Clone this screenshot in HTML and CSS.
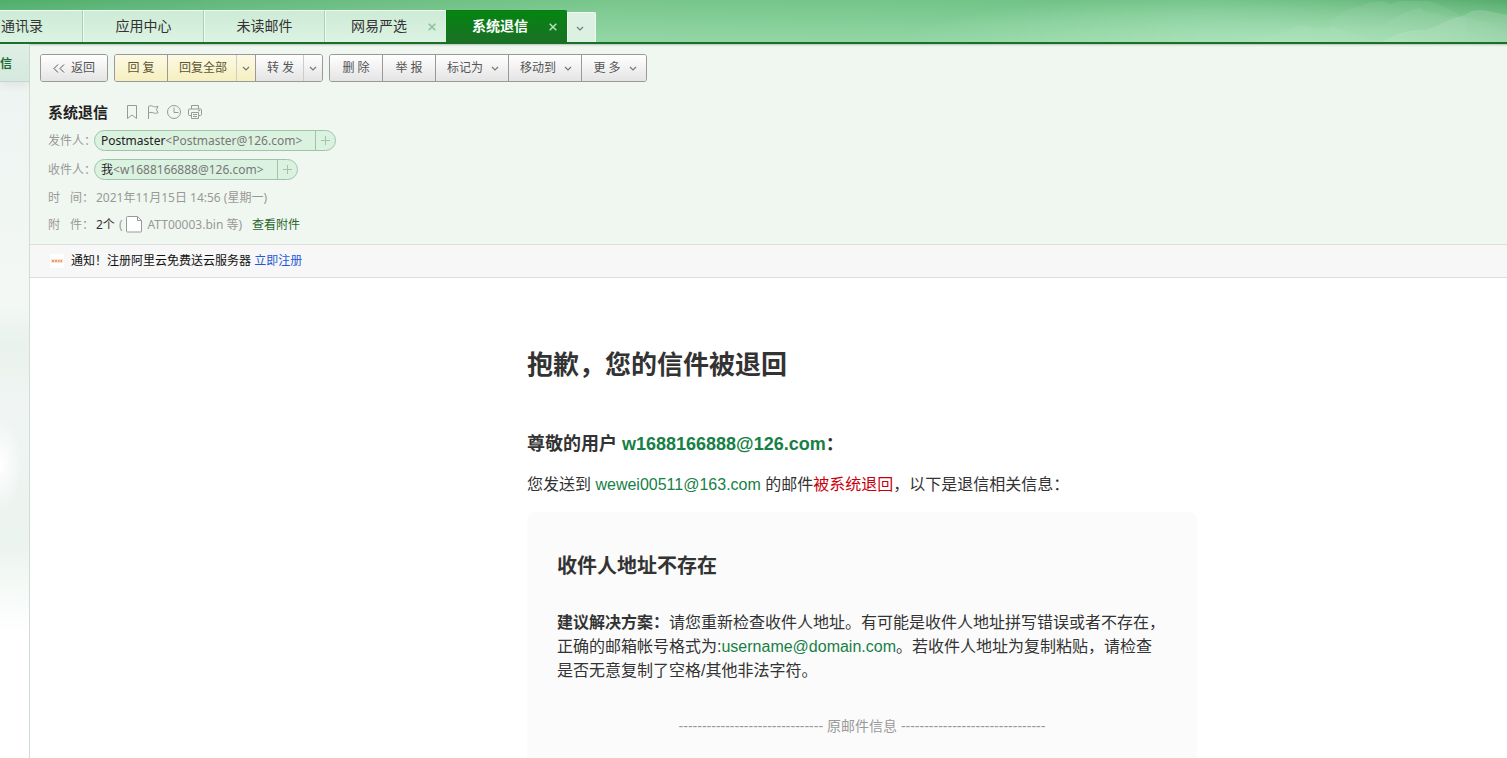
FILE: index.html
```html
<!DOCTYPE html>
<html lang="zh-CN">
<head>
<meta charset="utf-8">
<title>系统退信</title>
<link rel="stylesheet" href="styles.css">
</head>
<body>
<svg class="defs" aria-hidden="true">
  <symbol id="chevron" viewBox="0 0 8 6"><path d="M1 1l3 3 3-3" fill="none" stroke="currentColor" stroke-width="1.2"/></symbol>
  <symbol id="close" viewBox="0 0 8 8"><path d="M.7.7l6.6 6.6M7.3.7L.7 7.3" fill="none" stroke="currentColor" stroke-width="1.5"/></symbol>
</svg>
<header class="header">
  <svg class="hills" viewBox="0 0 407 42" aria-hidden="true">
    <defs>
      <linearGradient id="hillFade" x1="0" y1="0" x2="0" y2="1"><stop offset="0" stop-color="#fff" stop-opacity=".14"/><stop offset="1" stop-color="#fff" stop-opacity=".1"/></linearGradient>
      <linearGradient id="farFade" x1="0" y1="0" x2="0" y2="1"><stop offset="0" stop-color="#fff" stop-opacity=".07"/><stop offset="1" stop-color="#fff" stop-opacity="0"/></linearGradient>
    </defs>
    <path fill="url(#farFade)" d="M230 20l22-12 10-2 8-4 13-1 8 3 10-3 28 0 16 6 14 8 38 10v17H230z"/>
    <path fill="url(#farFade)" d="M282 26l16-10 14-6 8-2 7 4 8 1 12 4 8-1 12 3v23H250z"/>
    <path fill="url(#hillFade)" d="M281 42l16-8 8-2 11-2 10 0 12-5 14-6 12-4 8-4 9-1 8 1 8 2 10 2v29z"/>
    <path fill="url(#farFade)" d="M150 42l32-10 19-7 16 4 16-2 18 6 30 9z"/>
  </svg>
  <nav class="tabs">
    <div class="tab tab-cut"><button class="tab-label">通讯录</button></div>
    <div class="tab"><button class="tab-label">应用中心</button></div>
    <div class="tab"><button class="tab-label">未读邮件</button></div>
    <div class="tab closable"><button class="tab-label">网易严选</button><button class="tab-close" aria-label="关闭网易严选"><svg class="x"><use href="#close"/></svg></button></div>
    <div class="tab closable active"><button class="tab-label">系统退信</button><button class="tab-close" aria-label="关闭系统退信"><svg class="x"><use href="#close"/></svg></button></div>
    <button class="tab-more" aria-label="更多标签"><svg class="chev"><use href="#chevron"/></svg></button>
  </nav>
</header>
<div class="body">
  <aside class="side"><a class="side-item" href="#">信</a></aside>
  <main class="main">
    <div class="top">
      <div class="toolbar">
        <div class="group"><button class="btn back"><svg class="back-icon" viewBox="0 0 12 9"><path d="M5 .5l-4 4 4 4M11 .5l-4 4 4 4" fill="none" stroke="currentColor"/></svg>返回</button></div>
        <div class="group">
          <button class="btn yellow">回 复</button><button class="btn yellow wide">回复全部</button><button class="btn yellow drop" aria-label="回复全部选项"><svg class="chev"><use href="#chevron"/></svg></button><button class="btn send">转 发</button><button class="btn drop" aria-label="转发选项"><svg class="chev"><use href="#chevron"/></svg></button>
        </div>
        <div class="group">
          <button class="btn">删 除</button><button class="btn">举 报</button><button class="btn menu">标记为<svg class="chev"><use href="#chevron"/></svg></button><button class="btn menu">移动到<svg class="chev"><use href="#chevron"/></svg></button><button class="btn menu">更 多<svg class="chev"><use href="#chevron"/></svg></button>
        </div>
      </div>
      <div class="subject">
        <h1 class="subject-text">系统退信</h1>
        <button class="tool" aria-label="书签"><svg viewBox="0 0 14 14"><path d="M2.500.5h9v13L7 10l-4.500 3.500z"/></svg></button>
        <button class="tool" aria-label="旗标"><svg viewBox="0 0 14 14"><path d="M2.500 14V1.500c2-1.500 3.500-.5 5 0s3 .5 4.500-.2l-1.500 3.500 1.500 3c-2 .8-3.500.4-4.800 0s-3-.8-4.700.3"/></svg></button>
        <button class="tool" aria-label="定时"><svg viewBox="0 0 14 14"><circle cx="7" cy="7" r="6.500"/><path d="M7 2.500v5h4.500"/></svg></button>
        <button class="tool" aria-label="打印"><svg viewBox="0 0 14 14"><path d="M3.500 4V.5h7V4M3.500 10.500h-2a1 1 0 0 1-1-1v-4.500a1 1 0 0 1 1-1h11a1 1 0 0 1 1 1v4.500a1 1 0 0 1-1 1h-2M3.500 7.500h7v6h-7zM5 9.500h4M5 11.500h4M10 5.700h2"/></svg></button>
      </div>
      <div class="row"><span class="label">发件人：</span><span class="chip"><span class="chip-text"><b class="name">Postmaster</b>&lt;Postmaster@126.com&gt;</span><button class="add" aria-label="添加联系人"><svg viewBox="0 0 9 9"><path d="M4.500 0v9M0 4.500h9"/></svg></button></span></div>
      <div class="row"><span class="label">收件人：</span><span class="chip"><span class="chip-text"><b class="name">我</b>&lt;w1688166888@126.com&gt;</span><button class="add" aria-label="添加联系人"><svg viewBox="0 0 9 9"><path d="M4.500 0v9M0 4.500h9"/></svg></button></span></div>
      <div class="row short"><span class="label spread"><span>时</span><span>间：</span></span><span>2021年11月15日 14:56 (星期一)</span></div>
      <div class="row short"><span class="label spread"><span>附</span><span>件：</span></span><span class="files"><span class="count">2个</span><span>(</span><svg class="file" viewBox="0 0 17 17"><path d="M1.500.5h10l4 4v10.500a1 1 0 0 1-1 1h-13a1 1 0 0 1-1-1v-13.500a1 1 0 0 1 1-1z" fill="#fff" stroke="#999"/><path d="M11.500.5v4h4" fill="none" stroke="#999"/></svg><span>ATT00003.bin 等)</span></span><a class="view" href="#">查看附件</a></div>
    </div>
    <div class="notice">
      <svg class="ad" viewBox="0 0 14 14" aria-hidden="true"><rect width="14" height="14" fill="#fff"/><path d="M1 7h12" stroke="#fbe3d2" stroke-width="4"/><path d="M2 7h2M5 7h2M8 7h1.500M10.500 7H12" stroke="#ee9a68" stroke-width="2"/></svg>
      <span>通知！注册阿里云免费送云服务器 <a class="signup" href="#">立即注册</a></span>
    </div>
    <article class="mail">
      <div class="letter">
        <h2 class="title">抱歉，您的信件被退回</h2>
        <h3 class="dear">尊敬的用户 <a class="addr" href="#">w1688166888@126.com</a>：</h3>
        <p class="intro">您发送到 <a class="addr" href="#">wewei00511@163.com</a> 的邮件<span class="red">被系统退回</span>，以下是退信相关信息：</p>
        <section class="card">
          <h3 class="reason">收件人地址不存在</h3>
          <p class="advice"><b>建议解决方案：</b>请您重新检查收件人地址。有可能是收件人地址拼写错误或者不存在，正确的邮箱帐号格式为:<a class="addr" href="#">username@domain.com</a>。若收件人地址为复制粘贴，请检查是否无意复制了空格/其他非法字符。</p>
          <p class="divider">------------------------------- 原邮件信息 -------------------------------</p>
        </section>
      </div>
    </article>
  </main>
</div>
</body>
</html>
```
FILE: styles.css
```css
* { box-sizing: border-box; }
html, body { height: 100%; }
body {
  margin: 0;
  display: flex;
  flex-direction: column;
  overflow: hidden;
  font: 12px/18px "Noto Sans", "Noto Sans CJK SC", sans-serif;
  color: #222;
  background: #fff;
}
button { margin: 0; padding: 0; border: 0; background: none; font: inherit; color: inherit; cursor: pointer; }
a { text-decoration: none; }
h1, h2, h3, p { margin: 0; }
.defs { position: absolute; width: 0; height: 0; }

.header {
  position: relative;
  flex: none;
  padding-top: 10px;
  border-bottom: 2px solid #1a7025;
  background:
    radial-gradient(ellipse 420px 60px at 87% 115%, rgba(190, 236, 200, .75), rgba(190, 236, 200, 0)),
    linear-gradient(180deg, rgba(255, 255, 255, 0), rgba(190, 240, 205, .4)),
    linear-gradient(90deg, #50ae6c 0%, #68bb80 20%, #78c68c 40%, #74c58a 60%, #6dc085 80%, #4fa866 100%);
}
.hills { position: absolute; right: 0; top: 0; width: 407px; height: 42px; }
.tabs { position: relative; display: flex; height: 32px; font-size: 14px; color: #333; }
.tab {
  position: relative;
  display: flex;
  width: 121px;
  border-top: 1px solid #f2faf4;
  border-left: 1px solid #effaf2;
  border-right: 1px solid #a3d6b2;
  background: linear-gradient(#cdebd6, #dcf3e3);
}
.tab-label { flex: 1; padding-bottom: 2px; }
.tab-cut { width: 83px; border-left: 0; }
.tab-cut .tab-label { padding-left: 1px; text-align: left; }
.closable .tab-label { padding-left: 14px; }
.closable { border-right-color: #dcf3e3; }
.tab-close { width: 27px; padding-bottom: 2px; color: #8cc09c; }
.x { width: 8px; height: 8px; }
.tab.active {
  border-color: #0a7b14;
  border-radius: 0 2px 0 0;
  background: linear-gradient(#058511, #1a7025);
  color: #fff;
  font-weight: bold;
}
.active .tab-close { color: #b5dfbd; }
.tab-more {
  width: 29px;
  margin-top: 2px;
  padding: 0 4px 2px 0;
  border: 1px solid #effaf2;
  border-bottom: 0;
  border-radius: 0 2px 0 0;
  background: #dcf1e2;
}
.chev { width: 8px; height: 6px; color: #777; }
.btn .chev { margin-top: 2px; }

.body { display: flex; flex: 1; min-height: 0; }
.side {
  flex: none;
  width: 30px;
  border-right: 1px solid #d0ddd6;
  background:
    radial-gradient(ellipse 22px 46px at 0 420px, #fff, rgba(255, 255, 255, 0)),
    linear-gradient(#edf3f0 0, #f3f8f5 260px, #e9f2ed 300px, #f0f5f3 360px, #ecf4ef 500px, #fff 590px);
}
.side-item {
  display: block;
  height: 38px;
  border-bottom: 1px solid #c3d8cc;
  background: linear-gradient(#e0efe6, #d5e9de);
  box-shadow: 0 4px 8px rgba(0, 0, 0, .06);
  color: #1d6b34;
  font-size: 12px;
  font-weight: bold;
  line-height: 40px;
}
.main { flex: 1; min-width: 0; }
.top {
  padding: 10px 10px 6px;
  border-bottom: 1px solid #dcdfdd;
  background: #f0f7f0;
  box-shadow: inset 0 3px 2px -2px #b5c4b9;
  color: #999;
}
.toolbar { display: flex; gap: 6px; }
.group { display: flex; height: 28px; border: 1px solid #999; border-radius: 3px; overflow: hidden; }
.btn {
  display: flex;
  align-items: center;
  justify-content: center;
  width: 53px;
  border-left: 1px solid #999;
  background: linear-gradient(#fff, #e4e4e4);
  color: #555;
}
.btn:first-child { border-left: 0; width: 52px; }
.group .btn.back { width: 66px; gap: 6px; }
.back-icon { width: 12px; height: 9px; }
.btn.wide { width: 69px; padding-left: 2px; }
.btn.send { width: 48px; padding-left: 2px; }
.btn.drop { width: 19px; border-left-color: #ccc; }
.btn.yellow { background: linear-gradient(#fdfae4, #f6efbf); color: #5c5634; }
.btn.menu { width: 73px; padding-left: 2px; gap: 8px; }
.btn.menu:last-child { width: 65px; }

.subject { display: flex; align-items: center; gap: 7px; margin: 19px 8px 3px; height: 22px; }
.subject-text { margin-right: 10px; color: #222; font-size: 15px; line-height: 22px; }
.tool { display: flex; width: 14px; height: 14px; }
.tool svg { width: 14px; height: 14px; fill: none; stroke: #999; }
.row { display: flex; align-items: center; height: 29px; padding-left: 8px; }
.row.short { height: 27px; }
.label { flex: none; width: 46px; white-space: nowrap; }
.label.spread { display: flex; justify-content: space-between; margin-right: 2px; }
.chip { display: flex; height: 21px; border: 1px solid #9fc5a9; border-radius: 11px; background: #dcf2e1; color: #777; }
.chip-text { padding: 0 13px 0 6px; font-size: 12px; line-height: 19px; }
.name { color: #222; font-weight: normal; }
.add { display: flex; align-items: center; justify-content: center; width: 20px; border-left: 1px solid #9fc5a9; }
.add svg { width: 9px; height: 9px; stroke: #9fc5a9; fill: none; }
.files { display: flex; align-items: center; gap: 4px; }
.count { color: #333; }
.file { width: 17px; height: 17px; }
.view { margin-left: 10px; color: #27662f; }

.notice {
  display: flex;
  align-items: center;
  gap: 7px;
  height: 33px;
  padding-left: 20px;
  border-bottom: 1px solid #dcdcdc;
  background: #f7f7f7;
  color: #111;
}
.ad { width: 14px; height: 14px; }
.signup { color: #1e5ad7; }

.mail { padding: 67px 0 0 187px; color: #333; font-family: "Liberation Sans", "Noto Sans CJK SC", sans-serif; }
.letter { max-width: 670px; margin: 0 auto; }
.title { font-size: 26px; line-height: 40px; }
.dear { margin-top: 45px; font-size: 18px; line-height: 28px; }
.intro { margin-top: 15px; font-size: 16px; line-height: 24px; }
.addr { color: #168046; }
.red { color: #c7000b; }
.card { margin-top: 15px; padding: 39px 30px; border-radius: 8px; background: #fbfbfb; }
.reason { font-size: 20px; line-height: 30px; }
.advice { margin-top: 30px; font-size: 16px; line-height: 24px; }
.divider { margin-top: 32px; color: #999; font-size: 14px; line-height: 22px; text-align: center; }
```
